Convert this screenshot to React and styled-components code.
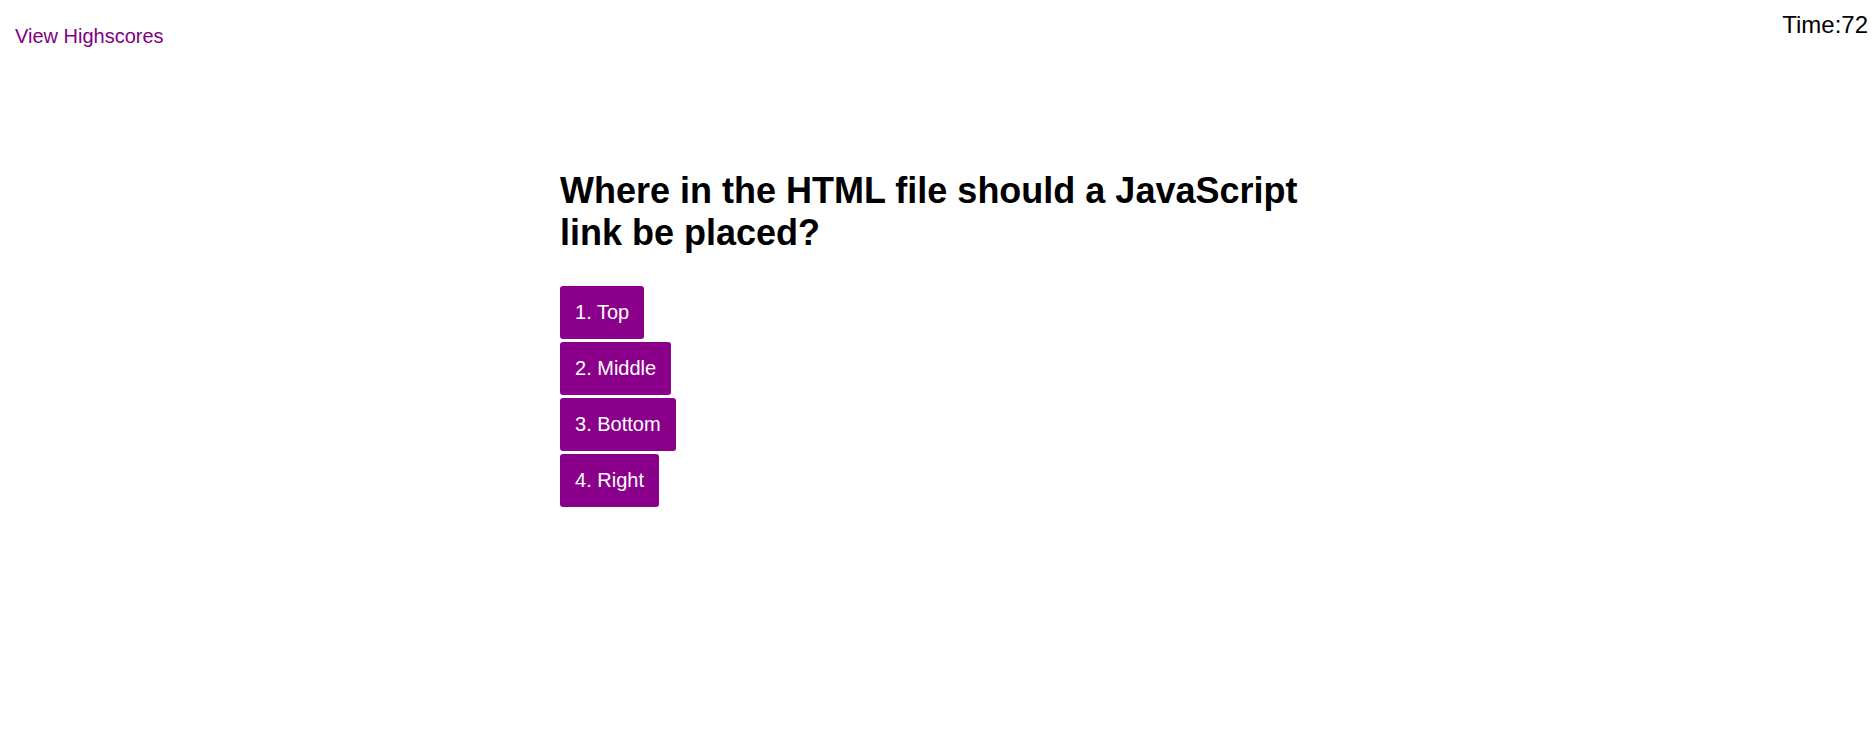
import React from "react";
import styled, { createGlobalStyle } from "styled-components";

const GlobalStyle = createGlobalStyle`
  body {
    margin: 0;
    background: #ffffff;
    font-family: "Liberation Sans", Arial, sans-serif;
  }
`;

const Header = styled.header`
  display: flex;
  justify-content: space-between;
  align-items: flex-start;
  height: 40px;
  padding: 11px 5px 0 15px;
  box-sizing: border-box;
`;

const ScoresLink = styled.a`
  margin-top: 14px;
  font-size: 20px;
  color: #800080;
  text-decoration: none;
  cursor: pointer;
`;

const Timer = styled.div`
  font-size: 24px;
  color: #000000;
`;

const Quiz = styled.main`
  width: 753px;
  margin: 0 auto;
  padding-top: 130px;
`;

const Question = styled.h2`
  margin: 0 0 32px;
  font-size: 36px;
  font-weight: 700;
  color: #000000;
`;

const Choices = styled.div`
  display: flex;
  flex-direction: column;
  align-items: flex-start;
  gap: 3px;
`;

const Choice = styled.button`
  padding: 15px;
  border: none;
  border-radius: 3px;
  background: #8b008b;
  color: #ffffff;
  font-family: "Liberation Sans", Arial, sans-serif;
  font-size: 20px;
  line-height: normal;
  cursor: pointer;
`;

const choices = ["Top", "Middle", "Bottom", "Right"];

export default function App() {
  return (
    <>
      <GlobalStyle />
      <Header>
        <ScoresLink>View Highscores</ScoresLink>
        <Timer>Time:72</Timer>
      </Header>
      <Quiz>
        <Question>Where in the HTML file should a JavaScript link be placed?</Question>
        <Choices>
          {choices.map((c, i) => (
            <Choice key={c}>
              {i + 1}. {c}
            </Choice>
          ))}
        </Choices>
      </Quiz>
    </>
  );
}
